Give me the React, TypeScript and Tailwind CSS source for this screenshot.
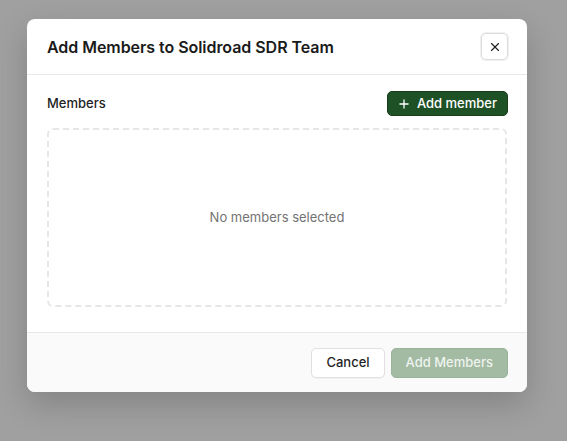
import React from "react";

function XIcon() {
  return (
    <svg width="14" height="14" viewBox="0 0 24 24" fill="none" stroke="currentColor" strokeWidth="2" strokeLinecap="round" strokeLinejoin="round">
      <path d="M18 6 6 18" />
      <path d="m6 6 12 12" />
    </svg>
  );
}

function PlusIcon() {
  return (
    <svg width="14" height="14" viewBox="0 0 24 24" fill="none" stroke="currentColor" strokeWidth="2.2" strokeLinecap="round" strokeLinejoin="round">
      <path d="M5 12h14" />
      <path d="M12 5v14" />
    </svg>
  );
}

export default function App() {
  return (
    <div
      className="w-[567px] h-[441px] bg-[#a0a0a0] pt-[19px] pl-[27px] overflow-hidden"
      style={{ fontFamily: "Inter, 'Noto Sans', sans-serif" }}
    >
      <div className="w-[500px] bg-white rounded-[8px] shadow-[0_12px_32px_rgba(0,0,0,0.18)] overflow-hidden">
        {/* header */}
        <div className="h-[56px] flex items-center justify-between pl-[20px] pr-[19px] border-b border-[#e8e8e8]">
          <h2 className="text-[16px] font-semibold text-[#1a1a1a] tracking-[-0.05px]">
            Add Members to Solidroad SDR Team
          </h2>
          <button className="w-[27px] h-[27px] flex items-center justify-center rounded-[5px] border border-[#dcdcdc] shadow-[0_0_0_1px_#f0f0f0] text-[#222]">
            <XIcon />
          </button>
        </div>

        {/* body */}
        <div className="pl-[20px] pr-[19px] pt-[16px] pb-[25px]">
          <div className="flex items-center justify-between">
            <span className="text-[13px] font-medium text-[#1f1f1f]">Members</span>
            <button className="h-[25px] pl-[9px] pr-[10px] flex items-center gap-[6px] rounded-[5px] bg-[#1f5127] border border-[#173d1d] text-white text-[13px] font-medium">
              <PlusIcon />
              Add member
            </button>
          </div>
          <div className="mt-[12px] mr-[1px] h-[179px] rounded-[6px] border-2 border-dashed border-[#e6e6e6] flex items-center justify-center">
            <span className="text-[13px] text-[#737373]">No members selected</span>
          </div>
        </div>

        {/* footer */}
        <div className="h-[60px] bg-[#fafafa] border-t border-[#e8e8e8] flex items-center justify-end gap-[6px] pr-[19px]">
          <button className="h-[30px] px-[14px] rounded-[5px] border border-[#e0e0e0] bg-white text-[13px] font-medium text-[#1f1f1f] shadow-[0_1px_1px_rgba(0,0,0,0.04)]">
            Cancel
          </button>
          <button className="h-[30px] px-[14px] rounded-[5px] bg-[#a3baa3] border border-[#9ab29a] text-[13px] font-medium text-[#eef3ee]">
            Add Members
          </button>
        </div>
      </div>
    </div>
  );
}
